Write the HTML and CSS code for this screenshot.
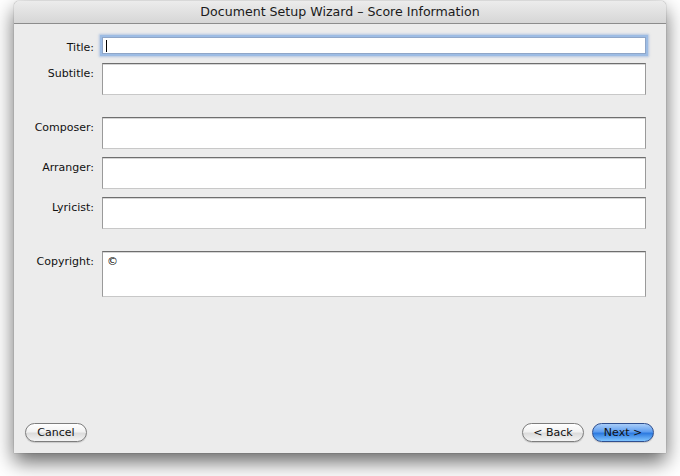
FILE: index.html
```html
<!DOCTYPE html>
<html lang="en">
<head>
    <meta charset="UTF-8">
    <title>Document Setup Wizard</title>
    <link rel="stylesheet" href="styles.css">
</head>
<body>
    <div class="window">
        <div class="title-bar">Document Setup Wizard – Score Information</div>
        <div class="window-body">
            <div class="form">
                <div class="row">
                    <label class="label">Title:</label>
                    <div class="field field-focus"><span class="caret"></span></div>
                </div>
                <div class="row">
                    <label class="label">Subtitle:</label>
                    <div class="field field-tall"></div>
                </div>
                <div class="row group-start">
                    <label class="label">Composer:</label>
                    <div class="field field-tall"></div>
                </div>
                <div class="row">
                    <label class="label">Arranger:</label>
                    <div class="field field-tall"></div>
                </div>
                <div class="row">
                    <label class="label">Lyricist:</label>
                    <div class="field field-tall"></div>
                </div>
                <div class="row group-start">
                    <label class="label">Copyright:</label>
                    <div class="field field-big">©</div>
                </div>
            </div>
            <div class="buttons">
                <button class="btn">Cancel</button>
                <div class="nav-buttons">
                    <button class="btn">&lt; Back</button>
                    <button class="btn btn-default">Next &gt;</button>
                </div>
            </div>
        </div>
    </div>
</body>
</html>
```

FILE: styles.css
```css
* {
    margin: 0;
    padding: 0;
    box-sizing: border-box;
}

body {
    background: #ffffff;
    font-family: "DejaVu Sans", "Lucida Grande", sans-serif;
    width: 680px;
    height: 476px;
    overflow: hidden;
    padding: 1px 14px 0 14px;
}

.window {
    width: 652px;
    height: 452px;
    background: #ececec;
    border-radius: 5px 5px 0 0;
    box-shadow: 0 9px 20px rgba(0,0,0,0.6), 0 0 1px rgba(0,0,0,0.6);
    display: flex;
    flex-direction: column;
}

.title-bar {
    height: 23px;
    line-height: 22px;
    text-align: center;
    font-size: 12.6px;
    color: #1a1a1a;
    background: linear-gradient(#ececec, #d6d6d6);
    border-bottom: 1px solid #8c8c8c;
    border-radius: 5px 5px 0 0;
}

.window-body {
    flex: 1;
    display: flex;
    flex-direction: column;
    justify-content: space-between;
    padding: 13px 20px 11px 11px;
}

.form {
    display: flex;
    flex-direction: column;
    gap: 8px;
}

.row {
    display: grid;
    grid-template-columns: 69px 1fr;
    column-gap: 8px;
    align-items: start;
}

.row.group-start {
    margin-top: 14px;
}

.label {
    font-size: 11px;
    color: #111;
    text-align: right;
    padding-top: 4px;
}

.field {
    background: #fff;
    border: 1px solid #9a9a9a;
    border-top-color: #6e6e6e;
    border-bottom-color: #c8c8c8;
    box-shadow: inset 0 1px 0 #d6d6d6;
    font-size: 11px;
    padding: 3px 4px;
}

.field-focus {
    height: 17px;
    margin-bottom: 1px;
    border-color: #8fa6c8;
    box-shadow: 0 0 0 2px #9dbce4, 0 0 2px 3px rgba(120,160,215,0.5);
    padding: 2px 3px;
}

.caret {
    display: block;
    width: 1px;
    height: 12px;
    background: #000;
}

.field-tall {
    height: 32px;
}

.field-big {
    height: 46px;
}

.buttons {
    display: flex;
    justify-content: space-between;
    align-items: center;
}

.nav-buttons {
    display: flex;
    gap: 8px;
    margin-right: -8px;
}

.btn {
    width: 62px;
    height: 19px;
    border-radius: 10px;
    border: 1px solid #7d7d7d;
    background: linear-gradient(#ffffff 0%, #f2f2f2 45%, #dcdcdc 55%, #f4f4f4 100%);
    font-family: "DejaVu Sans", "Lucida Grande", sans-serif;
    font-size: 11px;
    color: #111;
    box-shadow: 0 1px 1px rgba(0,0,0,0.15);
}

.btn-default {
    border-color: #2f4f8f;
    background: linear-gradient(#a9cdf8 0%, #5f9ef0 45%, #2e7be0 55%, #7fc4ff 100%);
}
```
